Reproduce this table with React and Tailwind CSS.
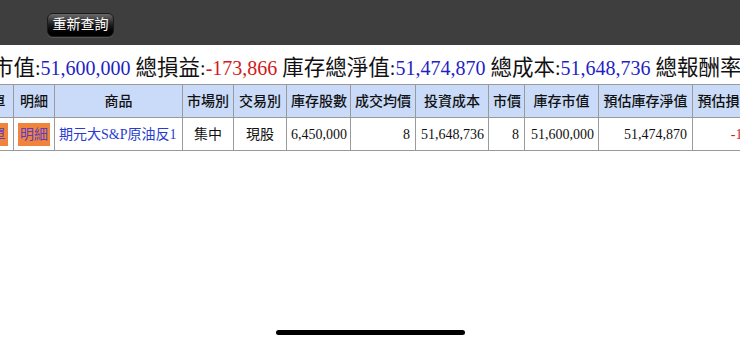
// Inventory summary page: dark toolbar, totals line and holdings table
const cols = [
  { label: "下單", w: "w-[44px]" },
  { label: "明細", w: "w-[41px]" },
  { label: "商品", w: "w-[128px]" },
  { label: "市場別", w: "w-[51px]" },
  { label: "交易別", w: "w-[53px]" },
  { label: "庫存股數", w: "w-[64px]" },
  { label: "成交均價", w: "w-[65px]" },
  { label: "投資成本", w: "w-[73px]" },
  { label: "市價", w: "w-[36px]" },
  { label: "庫存市值", w: "w-[74px]" },
  { label: "預估庫存淨值", w: "w-[94px]" },
  { label: "預估損益金額", w: "w-[94px]" },
  { label: "報酬率", w: "w-[70px]" },
];

function Num({ children, red }) {
  return <span className={red ? "text-[#d11a1a]" : "text-[#1f1fc4]"}>{children}</span>;
}

function Label({ children }) {
  return <span className="text-[21.5px]">{children}</span>;
}

export default function App() {
  const font = { fontFamily: '"Liberation Serif", "Noto Sans CJK TC", serif' };
  return (
    <div className="relative w-[740px] h-[342px] overflow-hidden bg-white" style={font}>
      <div className="h-[45px] bg-[#3e3e3e] pt-[12px] pl-[47px]">
        <button
          type="button"
          className="w-[67px] h-[24px] rounded-[6px] border border-[#1a1a1a] bg-gradient-to-b from-[#6b6b6b] via-[#1c1c1c] to-black text-white text-[14px] leading-[22px] shadow-[0_1px_0_#555]"
        >
          重新查詢
        </button>
      </div>

      <div className="mt-[11px] ml-[-51px] whitespace-nowrap text-[20px] leading-[24px] text-[#111]">
        <Label>庫存市值</Label>:<Num>51,600,000</Num> <Label>總損益</Label>:<Num red>-173,866</Num>{" "}
        <Label>庫存總淨值</Label>:<Num>51,474,870</Num> <Label>總成本</Label>:<Num>51,648,736</Num>{" "}
        <Label>總報酬率</Label>:<Num red>-0.34%</Num>
      </div>

      <table className="mt-[4px] ml-[-31px] w-[887px] table-fixed border-collapse text-[14px] text-[#111]">
        <thead>
          <tr className="h-[33px] bg-[#c9dbf8]">
            {cols.map((c, i) => (
              <th key={i} className={`${c.w} border border-[#9a9a9a] px-[4px] font-medium whitespace-nowrap overflow-hidden`}>
                {c.label}
              </th>
            ))}
          </tr>
        </thead>
        <tbody>
          <tr className="h-[33px]">
            <td className="border border-[#9a9a9a] text-center">
              <span className="inline-block bg-[#f0843c] text-[#5b3cc2] px-[2px] leading-[23px]">下單</span>
            </td>
            <td className="border border-[#9a9a9a] text-center">
              <span className="inline-block bg-[#f0843c] text-[#5b3cc2] px-[2px] leading-[23px]">明細</span>
            </td>
            <td className="border border-[#9a9a9a] px-[4px] text-[#2a3ccf] whitespace-nowrap">期元大S&amp;P原油反1</td>
            <td className="border border-[#9a9a9a] text-center">集中</td>
            <td className="border border-[#9a9a9a] text-center">現股</td>
            <td className="border border-[#9a9a9a] px-[4px] text-right">6,450,000</td>
            <td className="border border-[#9a9a9a] px-[5px] text-right">8</td>
            <td className="border border-[#9a9a9a] px-[4px] text-right">51,648,736</td>
            <td className="border border-[#9a9a9a] px-[5px] text-right">8</td>
            <td className="border border-[#9a9a9a] px-[4px] text-right">51,600,000</td>
            <td className="border border-[#9a9a9a] px-[5px] text-right">51,474,870</td>
            <td className="border border-[#9a9a9a] px-[5px] text-right text-[#d11a1a]">-173,866</td>
            <td className="border border-[#9a9a9a] px-[5px] text-right text-[#d11a1a]">-0.34%</td>
          </tr>
        </tbody>
      </table>

      <div className="absolute left-[276px] top-[330px] w-[189px] h-[5px] rounded-full bg-black" />
    </div>
  );
}
